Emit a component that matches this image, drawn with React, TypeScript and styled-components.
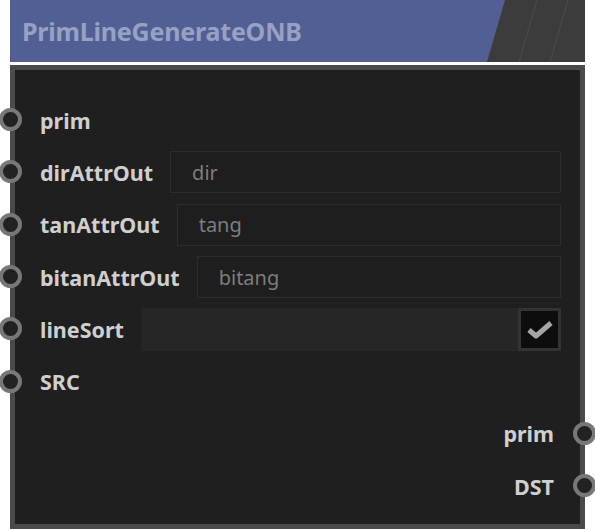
import React from 'react';
import styled, { createGlobalStyle } from 'styled-components';

const GlobalStyle = createGlobalStyle`
  html, body {
    margin: 0;
    padding: 0;
    background: #ffffff;
  }
  body {
    font-family: "Noto Sans", "Open Sans", sans-serif;
  }
`;

const Node = styled.div`
  width: 575px;
  margin-left: 10px;
  display: flex;
  flex-direction: column;
  gap: 3px;
`;

const Header = styled.div`
  height: 62px;
  display: flex;
  align-items: center;
  background: #525f95;
  overflow: hidden;
`;

const Title = styled.h1`
  flex: 1;
  margin: 0;
  padding-left: 12px;
  font-size: 25px;
  font-weight: 700;
  color: #98a1c4;
  letter-spacing: -0.2px;
`;

const Decor = styled.svg`
  width: 98px;
  height: 62px;
  display: block;
  flex-shrink: 0;
`;

const Body = styled.div`
  box-sizing: border-box;
  height: 464px;
  background: #1f1f1f;
  border: 5px solid #4a4a4a;
  padding: 24px 0 10px;
  display: flex;
  flex-direction: column;
`;

const Row = styled.div<{ $out?: boolean }>`
  position: relative;
  height: 52.3px;
  flex-shrink: 0;
  display: flex;
  align-items: center;
  justify-content: ${p => (p.$out ? 'flex-end' : 'flex-start')};
  gap: 17px;
  padding: ${p => (p.$out ? '0 26px 0 0' : '0 19px 0 25px')};
`;

const Port = styled.span<{ $out?: boolean }>`
  position: absolute;
  top: 50%;
  ${p => (p.$out ? 'right: -16px;' : 'left: -16px;')}
  width: 15px;
  height: 15px;
  margin-top: -12px;
  border-radius: 50%;
  border: 4.5px solid #787878;
  background: #222222;
`;

const Label = styled.span`
  font-size: 21.5px;
  font-weight: 700;
  color: #cfcfcf;
  white-space: nowrap;
`;

const Field = styled.div`
  flex: 1;
  height: 42px;
  box-sizing: border-box;
  border: 1px solid #2c2c2c;
  background: #1e1e1e;
  display: flex;
  align-items: center;
  padding-left: 21px;
  font-size: 20px;
  color: #7d7d7d;
`;

const ToggleField = styled.div`
  flex: 1;
  height: 43px;
  background: #262626;
  display: flex;
  justify-content: flex-end;
`;

const CheckBox = styled.div`
  width: 43px;
  height: 43px;
  box-sizing: border-box;
  border: 3px solid #333333;
  background: #0d0d0d;
  display: flex;
  align-items: center;
  justify-content: center;
`;

const inputs = [
  { name: 'dirAttrOut', value: 'dir' },
  { name: 'tanAttrOut', value: 'tang' },
  { name: 'bitanAttrOut', value: 'bitang' },
];

const App: React.FC = () => (
  <>
    <GlobalStyle />
    <Node>
      <Header>
        <Title>PrimLineGenerateONB</Title>
        <Decor viewBox="0 0 98 62">
          <polygon points="18,0 98,0 98,62 0,62" fill="#3c3c3c" />
          <line x1="50" y1="0" x2="32" y2="62" stroke="#474747" strokeWidth="1.5" />
          <line x1="81" y1="0" x2="63" y2="62" stroke="#474747" strokeWidth="1.5" />
        </Decor>
      </Header>
      <Body>
        <Row>
          <Port />
          <Label>prim</Label>
        </Row>
        {inputs.map(i => (
          <Row key={i.name}>
            <Port />
            <Label>{i.name}</Label>
            <Field>{i.value}</Field>
          </Row>
        ))}
        <Row>
          <Port />
          <Label>lineSort</Label>
          <ToggleField>
            <CheckBox>
              <svg width="30" height="22" viewBox="0 0 30 22">
                <polyline
                  points="4,12 11,18 26,5"
                  fill="none"
                  stroke="#a8a4a0"
                  strokeWidth="5"
                  strokeLinejoin="round"
                />
              </svg>
            </CheckBox>
          </ToggleField>
        </Row>
        <Row>
          <Port />
          <Label>SRC</Label>
        </Row>
        <Row $out>
          <Label>prim</Label>
          <Port $out />
        </Row>
        <Row $out>
          <Label>DST</Label>
          <Port $out />
        </Row>
      </Body>
    </Node>
  </>
);

export default App;
